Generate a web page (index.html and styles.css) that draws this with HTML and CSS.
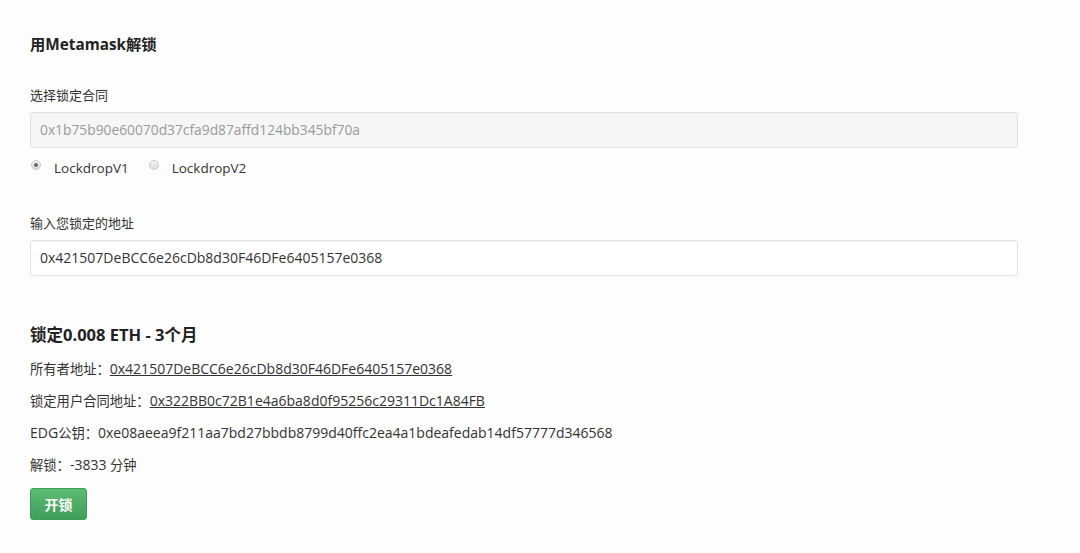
FILE: index.html
```html
<!DOCTYPE html>
<html lang="zh">
<head>
<meta charset="utf-8">
<link rel="stylesheet" href="styles.css">
</head>
<body>
<div class="page">
  <h1 class="title">用Metamask解锁</h1>
  <label class="label first">选择锁定合同</label>
  <div class="input disabled">0x1b75b90e60070d37cfa9d87affd124bb345bf70a</div>
  <div class="radios">
    <span class="radio checked"></span><span class="radio-text">LockdropV1</span>
    <span class="radio"></span><span class="radio-text">LockdropV2</span>
  </div>
  <label class="label second">输入您锁定的地址</label>
  <div class="input">0x421507DeBCC6e26cDb8d30F46DFe6405157e0368</div>
  <h2 class="subtitle">锁定0.008 ETH - 3个月</h2>
  <div class="info">
    <p class="line"><span class="cjk">所有者地址：</span><a class="link">0x421507DeBCC6e26cDb8d30F46DFe6405157e0368</a></p>
    <p class="line"><span class="cjk">锁定用户合同地址：</span><a class="link">0x322BB0c72B1e4a6ba8d0f95256c29311Dc1A84FB</a></p>
    <p class="line">EDG<span class="cjk">公钥：</span>0xe08aeea9f211aa7bd27bbdb8799d40ffc2ea4a1bdeafedab14df57777d346568</p>
    <p class="line"><span class="cjk">解锁：</span>-3833 <span class="cjk">分钟</span></p>
  </div>
  <button class="btn">开锁</button>
</div>
</body>
</html>
```

FILE: styles.css
```css
html, body {
  margin: 0;
  padding: 0;
  background: #fdfdfd;
}
body {
  font-family: "Open Sans", "Noto Sans CJK SC", sans-serif;
  color: #333;
}
.page {
  padding: 34px 0 0 30px;
  width: 988px;
}
.title {
  margin: 0;
  font-size: 15.3px;
  line-height: 20px;
  font-weight: 700;
  color: #222;
}
.label {
  display: block;
  font-size: 13px;
  line-height: 16px;
  color: #333;
}
.label.first { margin-top: 33px; }
.label.second { margin-top: 37px; }
.input {
  margin-top: 9px;
  box-sizing: border-box;
  height: 36px;
  border: 1px solid #e2e2e2;
  border-radius: 3px;
  background: #fff;
  padding: 0 9px;
  font-size: 14px;
  line-height: 34px;
  color: #333;
  box-shadow: inset 0 1px 1px rgba(0,0,0,0.03);
}
.input.disabled {
  background: #f6f6f6;
  color: #9a9a9a;
  font-size: 13.8px;
}
.radios {
  margin-top: 10px;
  height: 20px;
  display: flex;
  align-items: center;
  font-size: 13.5px;
  line-height: 20px;
}
.radio {
  width: 10px;
  height: 10px;
  box-sizing: border-box;
  border-radius: 50%;
  border: 1px solid #c8c8c8;
  background: linear-gradient(#f4f4f4, #dcdcdc);
  margin-left: 1px;
  margin-right: 13px;
  position: relative;
  top: -3px;
}
.radio.checked::after {
  content: "";
  position: absolute;
  left: 2px;
  top: 2px;
  width: 4px;
  height: 4px;
  border-radius: 50%;
  background: #666;
}
.radio-text {
  margin-right: 19px;
  color: #333;
}
.subtitle {
  margin: 48px 0 0;
  font-size: 16.5px;
  line-height: 22px;
  font-weight: 700;
  color: #222;
}
.info {
  margin-top: 13px;
  display: flex;
  flex-direction: column;
  gap: 12px;
}
.line {
  margin: 0;
  font-size: 14px;
  line-height: 20px;
  color: #333;
}
.cjk {
  font-size: 13.3px;
}
.link {
  color: #333;
  text-decoration: underline;
}
.btn {
  margin-top: 13px;
  width: 57px;
  height: 32px;
  border: 1px solid #3e9c5a;
  border-radius: 3px;
  background: linear-gradient(#5cbc72, #3f9f5a);
  color: #fff;
  font-family: "Noto Sans CJK SC", sans-serif;
  font-weight: 700;
  font-size: 14px;
  padding: 0;
  box-shadow: 0 1px 1px rgba(0,0,0,0.1);
}
```
